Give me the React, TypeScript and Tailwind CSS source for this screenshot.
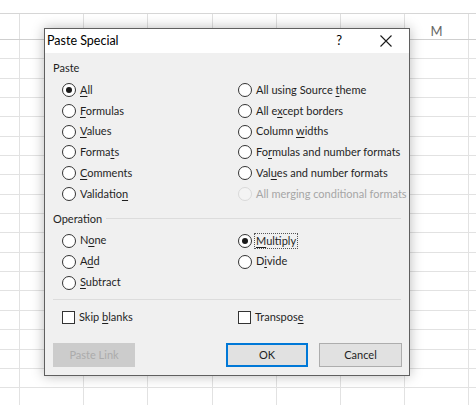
import React from "react";

const FONT = "font-['Lato',_'Liberation_Sans',_sans-serif]";

const COLS = ["F", "G", "H", "I", "J", "K", "L", "M", "N"];
const COL_W = ["w-[20px]", "w-[64px]", "w-[64px]", "w-[65px]", "w-[64px]", "w-[64px]", "w-[64px]", "w-[64px]", "w-[64px]"];

function Key({ text, k }: { text: string; k?: number }) {
  if (k === undefined) return <span>{text}</span>;
  return (
    <span>
      {text.slice(0, k)}
      <u className="underline-offset-2">{text[k]}</u>
      {text.slice(k + 1)}
    </span>
  );
}

function Radio({
  label,
  k,
  checked,
  disabled,
  focus,
}: {
  label: string;
  k?: number;
  checked?: boolean;
  disabled?: boolean;
  focus?: boolean;
}) {
  return (
    <div className="flex items-center gap-[2px] whitespace-nowrap">
      <span
        className={
          "flex h-[14px] w-[14px] shrink-0 items-center justify-center rounded-full border " +
          (disabled ? "border-[#d9d9d9] bg-[#f4f4f4]" : "border-[#333] bg-white")
        }
      >
        {checked && <span className="h-[6px] w-[6px] rounded-full bg-[#1a1a1a]" />}
      </span>
      <span
        className={
          (disabled ? "text-[#a6a6a6] " : "text-[#1f1f1f] ") +
          (focus ? "border border-dotted border-[#555] px-[1px] leading-[14px]" : "px-[2px]")
        }
      >
        <Key text={label} k={k} />
      </span>
    </div>
  );
}

function Check({ label, k }: { label: string; k: number }) {
  return (
    <div className="flex items-center gap-[2px] whitespace-nowrap">
      <span className="h-[13px] w-[13px] shrink-0 border border-[#333] bg-white" />
      <span className="px-[2px] text-[#1f1f1f]">
        <Key text={label} k={k} />
      </span>
    </div>
  );
}

export default function App() {
  const pasteLeft: [string, number][] = [
    ["All", 0],
    ["Formulas", 0],
    ["Values", 0],
    ["Formats", 5],
    ["Comments", 0],
    ["Validation", 9],
  ];
  const pasteRight: [string, number | undefined][] = [
    ["All using Source theme", 17],
    ["All except borders", 5],
    ["Column widths", 7],
    ["Formulas and number formats", 2],
    ["Values and number formats", 3],
  ];

  return (
    <div className={"relative h-[405px] w-[476px] overflow-hidden bg-white " + FONT}>
      {/* sheet */}
      <div className="h-[14px] border-b border-[#d6d6d6]" />
      <div className="flex h-[26px] border-b border-[#cfcfcf]">
        {COLS.map((c, i) => (
          <div
            key={c}
            className={
              COL_W[i] +
              " flex shrink-0 items-center justify-center border-r border-[#e0e0e0] pt-[10px] text-[13px] text-[#666]"
            }
          >
            {c === "M" ? c : ""}
          </div>
        ))}
      </div>
      {Array.from({ length: 19 }).map((_, r) => (
        <div key={r} className="flex h-[19.35px] border-b border-[#e2e2e2]">
          {COLS.map((c, i) => (
            <div key={c} className={COL_W[i] + " shrink-0 border-r border-[#e2e2e2]"} />
          ))}
        </div>
      ))}

      {/* dialog */}
      <div className="absolute left-[44px] top-[28px] flex h-[348px] w-[366px] flex-col border border-[#5f5f5f] bg-[#f0f0f0] text-[11px] shadow-[0_0_12px_rgba(0,0,0,0.28)]">
        <div className="flex h-[24px] shrink-0 items-center bg-white pl-[2px] text-[12.5px] text-black">
          <span className="flex-1">Paste Special</span>
          <span className="mr-[38px] text-[13px]">?</span>
          <svg width="12" height="12" viewBox="0 0 12 12" className="mr-[17px]">
            <path d="M0.5 0.5 L11.5 11.5 M11.5 0.5 L0.5 11.5" stroke="#1a1a1a" strokeWidth="1.1" />
          </svg>
        </div>

        <div className="flex flex-1 flex-col px-[8px]">
          <div className="h-[27px] pt-[8px] leading-[14px] text-[#1f1f1f]">Paste</div>
          <div className="grid grid-cols-[176px_1fr] pl-[9px]">
            <div className="flex flex-col">
              {pasteLeft.map(([t, k], i) => (
                <div key={t} className="flex h-[20.7px] items-center">
                  <Radio label={t} k={k} checked={i === 0} />
                </div>
              ))}
            </div>
            <div className="flex flex-col">
              {pasteRight.map(([t, k]) => (
                <div key={t} className="flex h-[20.7px] items-center">
                  <Radio label={t} k={k} />
                </div>
              ))}
              <div className="flex h-[20.7px] items-center">
                <Radio label="All merging conditional formats" disabled />
              </div>
            </div>
          </div>

          <div className="flex h-[26px] items-center gap-[4px] pt-[4px] text-[#1f1f1f]">
            <span>Operation</span>
            <div className="mt-[-2px] h-px flex-1 bg-[#dcdcdc]" />
          </div>
          <div className="grid grid-cols-[176px_1fr] pl-[9px]">
            <div className="flex flex-col">
              <div className="flex h-[21px] items-center">
                <Radio label="None" k={1} />
              </div>
              <div className="flex h-[21px] items-center">
                <Radio label="Add" k={1} />
              </div>
              <div className="flex h-[21px] items-center">
                <Radio label="Subtract" k={0} />
              </div>
            </div>
            <div className="flex flex-col">
              <div className="flex h-[21px] items-center">
                <Radio label="Multiply" k={0} checked focus />
              </div>
              <div className="flex h-[21px] items-center">
                <Radio label="Divide" k={1} />
              </div>
            </div>
          </div>

          <div className="mt-[6px] h-px bg-[#dcdcdc]" />
          <div className="grid h-[34px] grid-cols-[176px_1fr] items-center pl-[9px]">
            <Check label="Skip blanks" k={5} />
            <Check label="Transpose" k={8} />
          </div>

          <div className="mt-[9px] flex h-[24px] items-stretch">
            <div className="flex w-[82px] items-center justify-center bg-[#cccccc] text-[#ababab]">Paste Link</div>
            <div className="flex-1" />
            <div className="flex w-[82px] items-center justify-center border-2 border-[#0078d7] bg-[#e1e1e1] text-[#1f1f1f]">
              OK
            </div>
            <div className="ml-[11px] mr-[-1px] flex w-[83px] items-center justify-center border border-[#adadad] bg-[#e1e1e1] text-[#1f1f1f]">
              Cancel
            </div>
          </div>
        </div>
      </div>
    </div>
  );
}
